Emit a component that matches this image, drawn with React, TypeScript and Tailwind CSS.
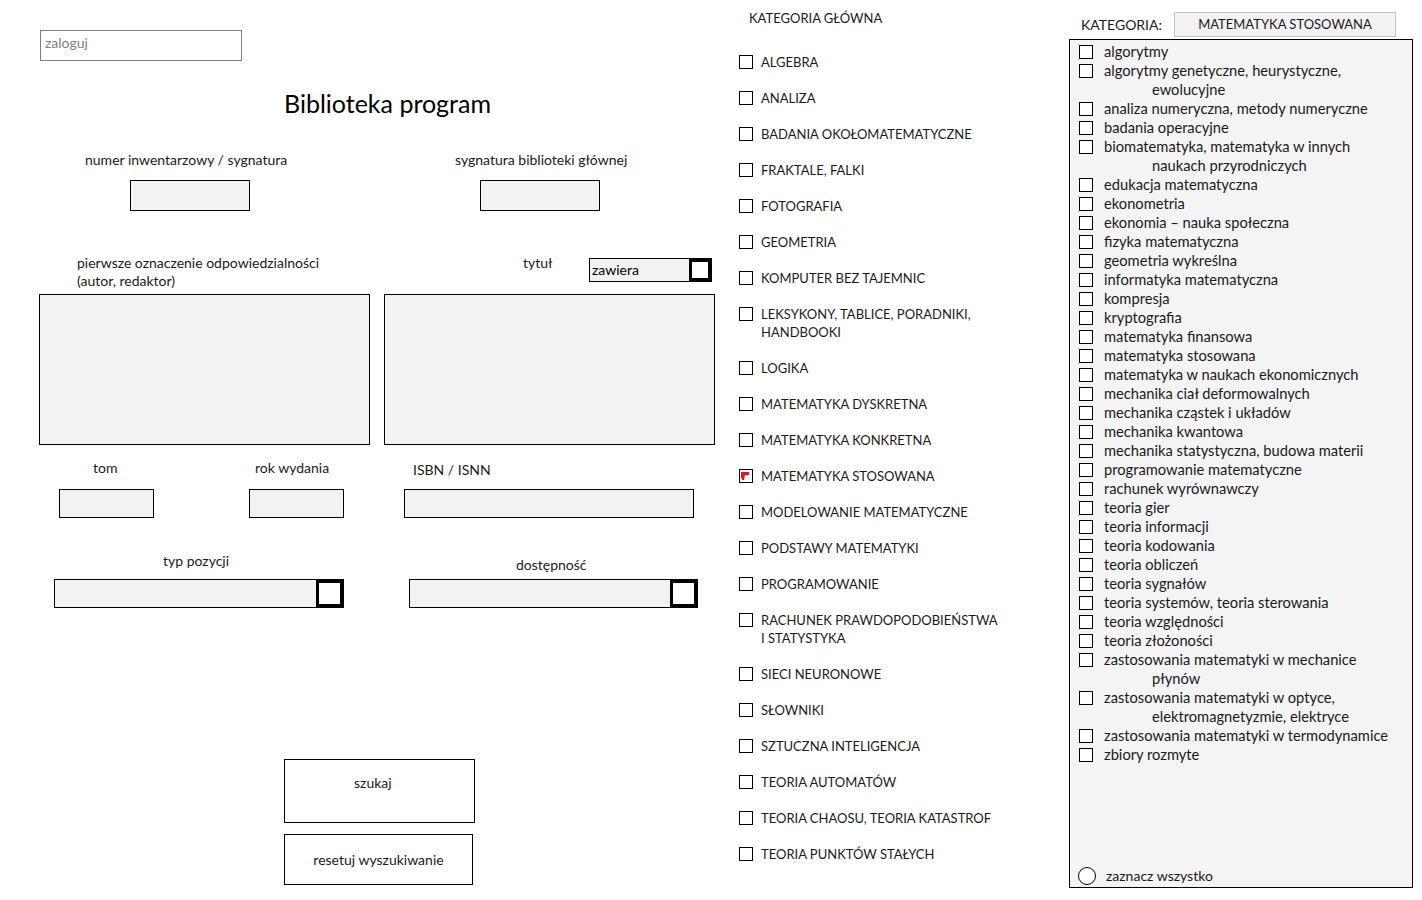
const font = { fontFamily: 'Lato, "Open Sans", sans-serif' }

const mainCats: string[][] = [
  ['ALGEBRA'],
  ['ANALIZA'],
  ['BADANIA OKOŁOMATEMATYCZNE'],
  ['FRAKTALE, FALKI'],
  ['FOTOGRAFIA'],
  ['GEOMETRIA'],
  ['KOMPUTER BEZ TAJEMNIC'],
  ['LEKSYKONY, TABLICE, PORADNIKI,', 'HANDBOOKI'],
  ['LOGIKA'],
  ['MATEMATYKA DYSKRETNA'],
  ['MATEMATYKA KONKRETNA'],
  ['MATEMATYKA STOSOWANA'],
  ['MODELOWANIE MATEMATYCZNE'],
  ['PODSTAWY MATEMATYKI'],
  ['PROGRAMOWANIE'],
  ['RACHUNEK PRAWDOPODOBIEŃSTWA', 'I STATYSTYKA'],
  ['SIECI NEURONOWE'],
  ['SŁOWNIKI'],
  ['SZTUCZNA INTELIGENCJA'],
  ['TEORIA AUTOMATÓW'],
  ['TEORIA CHAOSU, TEORIA KATASTROF'],
  ['TEORIA PUNKTÓW STAŁYCH'],
]

const subCats: string[][] = [
  ['algorytmy'],
  ['algorytmy genetyczne, heurystyczne,', 'ewolucyjne'],
  ['analiza numeryczna, metody numeryczne'],
  ['badania operacyjne'],
  ['biomatematyka, matematyka w innych', 'naukach przyrodniczych'],
  ['edukacja matematyczna'],
  ['ekonometria'],
  ['ekonomia – nauka społeczna'],
  ['fizyka matematyczna'],
  ['geometria wykreślna'],
  ['informatyka matematyczna'],
  ['kompresja'],
  ['kryptografia'],
  ['matematyka finansowa'],
  ['matematyka stosowana'],
  ['matematyka w naukach ekonomicznych'],
  ['mechanika ciał deformowalnych'],
  ['mechanika cząstek i układów'],
  ['mechanika kwantowa'],
  ['mechanika statystyczna, budowa materii'],
  ['programowanie matematyczne'],
  ['rachunek wyrównawczy'],
  ['teoria gier'],
  ['teoria informacji'],
  ['teoria kodowania'],
  ['teoria obliczeń'],
  ['teoria sygnałów'],
  ['teoria systemów, teoria sterowania'],
  ['teoria względności'],
  ['teoria złożoności'],
  ['zastosowania matematyki w mechanice', 'płynów'],
  ['zastosowania matematyki w optyce,', 'elektromagnetyzmie, elektryce'],
  ['zastosowania matematyki w termodynamice'],
  ['zbiory rozmyte'],
]

function Field({ className }: { className: string }) {
  return <div className={`border border-black bg-[#f2f2f2] ${className}`} />
}

function Combo({ className, text }: { className: string; text?: string }) {
  return (
    <div className={`flex border border-black bg-[#f2f2f2] ${className}`}>
      <div className="flex-1 pl-[2px] leading-[22px] text-[14px] text-black">{text}</div>
      <div className="h-full aspect-square border-[3px] border-black bg-white" />
    </div>
  )
}

function CheckBox({ checked }: { checked?: boolean }) {
  return (
    <div className="relative w-[14px] h-[14px] shrink-0 border border-black bg-white">
      {checked && (
        <svg className="absolute left-[1px] top-[1px]" width="9" height="10" viewBox="0 0 9 10">
          <path d="M0 1 L8 1 L8 4 L4 4 L3 9 L1 9 L0 6 Z" fill="#e8141b" />
        </svg>
      )}
    </div>
  )
}

export default function App() {
  return (
    <div className="flex w-[1422px] h-[900px] bg-white text-[#1a1a1a] overflow-hidden" style={font}>
      {/* left form */}
      <div className="w-[739px] shrink-0 text-[14px]">
        <div className="pt-[30px] pl-[40px]">
          <div className="w-[202px] h-[31px] border border-[#7f7f7f] pl-[4px] leading-[24px] text-[#7f7f7f]">zaloguj</div>
        </div>
        <div className="mt-[27px] pl-[284px] text-[25px] leading-[30px] text-black">Biblioteka program</div>
        <div className="flex mt-[33px] leading-[18px]">
          <div className="w-[455px] pl-[85px]">numer inwentarzowy / sygnatura</div>
          <div>sygnatura biblioteki głównej</div>
        </div>
        <div className="flex mt-[11px]">
          <Field className="ml-[130px] w-[120px] h-[31px]" />
          <Field className="ml-[230px] w-[120px] h-[31px]" />
        </div>
        <div className="flex mt-[43px] leading-[18px]">
          <div className="w-[446px] pl-[77px]">
            pierwsze oznaczenie odpowiedzialności
            <br />
            (autor, redaktor)
          </div>
          <div className="w-[143px] pl-[77px]">tytuł</div>
          <Combo className="mt-[4px] w-[123px] h-[24px]" text="zawiera" />
        </div>
        <div className="flex mt-[4px]">
          <Field className="ml-[39px] w-[331px] h-[151px]" />
          <Field className="ml-[14px] w-[331px] h-[151px]" />
        </div>
        <div className="flex mt-[14px] leading-[18px]">
          <div className="w-[255px] pl-[93px]">tom</div>
          <div className="w-[158px]">rok wydania</div>
          <div className="pt-[2px]">ISBN / ISNN</div>
        </div>
        <div className="flex mt-[10px]">
          <Field className="ml-[59px] w-[95px] h-[29px]" />
          <Field className="ml-[95px] w-[95px] h-[29px]" />
          <Field className="ml-[60px] w-[290px] h-[29px]" />
        </div>
        <div className="flex mt-[34px] leading-[18px]">
          <div className="w-[516px] pl-[163px]">typ pozycji</div>
          <div className="pt-[4px]">dostępność</div>
        </div>
        <div className="flex mt-[5px]">
          <Combo className="ml-[54px] w-[290px] h-[29px]" />
          <Combo className="ml-[65px] w-[289px] h-[29px]" />
        </div>
        <div className="ml-[284px] mt-[151px] w-[191px] h-[64px] border border-black pt-[14px] pl-[69px] leading-[18px]">szukaj</div>
        <div className="ml-[284px] mt-[11px] w-[189px] h-[51px] border border-black flex items-center justify-center leading-[18px]">
          resetuj wyszukiwanie
        </div>
      </div>

      {/* main categories */}
      <div className="w-[330px] shrink-0 text-[13px]">
        <div className="pt-[9px] pl-[10px] leading-[18px]">KATEGORIA GŁÓWNA</div>
        <div className="mt-[26px] flex flex-col gap-[18px]">
          {mainCats.map((lines, i) => (
            <div key={i} className="flex items-start gap-[8px] leading-[18px]">
              <div className="pt-[2px]">
                <CheckBox checked={lines[0] === 'MATEMATYKA STOSOWANA'} />
              </div>
              <div>
                {lines.map((l) => (
                  <div key={l}>{l}</div>
                ))}
              </div>
            </div>
          ))}
        </div>
      </div>

      {/* sub categories */}
      <div className="w-[344px] shrink-0 text-[14.7px]">
        <div className="flex items-center h-[39px] pt-[9px]">
          <div className="w-[105px] pl-[12px] text-[14px]">KATEGORIA:</div>
          <div className="w-[222px] h-[25px] border border-[#c6c6c6] bg-[#f2f2f2] text-center leading-[23px] text-[13px]">
            MATEMATYKA STOSOWANA
          </div>
        </div>
        <div className="h-[849px] border border-black bg-[#f4f4f4] flex flex-col">
          <div className="pt-[2px] pl-[9px] flex-1">
            {subCats.map((lines, i) => (
              <div key={i} className="flex items-start gap-[11px] leading-[19px]">
                <div className="pt-[3px]">
                  <CheckBox />
                </div>
                <div>
                  <div>{lines[0]}</div>
                  {lines[1] && <div className="pl-[48px]">{lines[1]}</div>}
                </div>
              </div>
            ))}
          </div>
          <div className="flex items-center gap-[10px] pl-[8px] pb-[1px] h-[20px] mb-[1px]">
            <div className="w-[18px] h-[18px] rounded-full border border-black bg-white" />
            <div className="leading-[18px] text-[14px]">zaznacz wszystko</div>
          </div>
        </div>
      </div>
    </div>
  )
}
